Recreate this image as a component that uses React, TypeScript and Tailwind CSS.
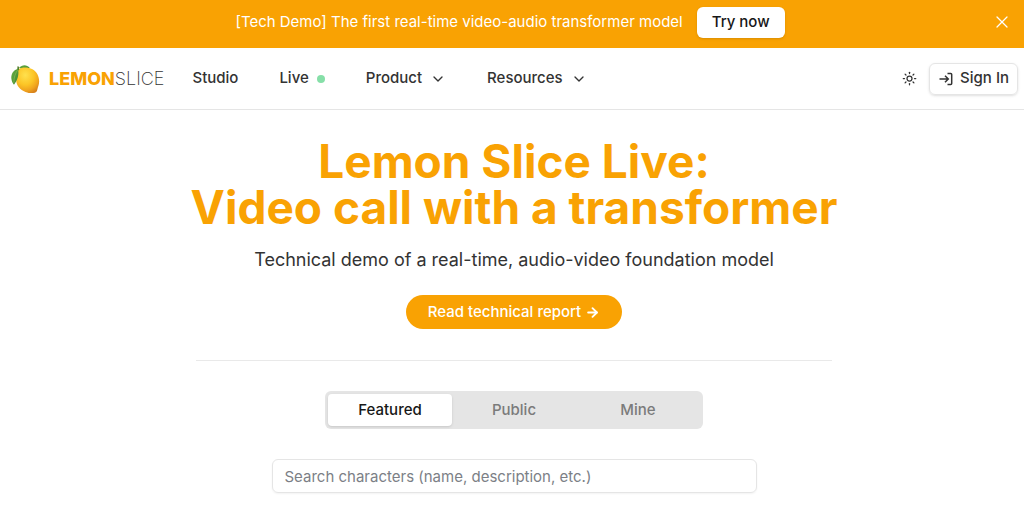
import { useState } from "react";
import { ArrowRight, ChevronDown, Sun, X } from "lucide-react";

const tabs = ["Featured", "Public", "Mine"];

function LemonLogo() {
  return (
    <svg viewBox="0 0 28 28" className="h-[30px] w-[30px]" aria-hidden="true">
      <defs>
        <radialGradient id="lemonSkin" cx="0.4" cy="0.3" r="0.75">
          <stop offset="0" stopColor="#ffe14e" />
          <stop offset="0.5" stopColor="#fcc526" />
          <stop offset="0.8" stopColor="#f0a31e" />
          <stop offset="1" stopColor="#d8831c" />
        </radialGradient>
        <linearGradient id="lemonLeaf" x1="0" y1="0" x2="1" y2="1">
          <stop offset="0" stopColor="#6cb043" />
          <stop offset="1" stopColor="#3a8530" />
        </linearGradient>
      </defs>
      <path d="M8.500 3.600C11 .6 15.500 0 18.500 3.700c-3.500 1.800-7 1.700-10-.1z" fill="url(#lemonLeaf)" />
      <path
        d="M8 4.800C11.500 2.600 17 2.800 21 5c4 2.300 6.200 6.500 6.200 11.300 0 3-1.200 4.900-1.600 7.200-.4 2.400-1.500 3.500-3.800 3.600-2.400.2-4.300.1-7.300-1C9.300 24.300 6 20.400 5.700 14.800c-.2-3.600.3-8 2.300-10z"
        fill="url(#lemonSkin)"
      />
      <path d="M7 2l1.400.5.2 2.800-2 1.800z" fill="#557e2a" />
      <path d="M7.400 4.500C3 5.700.3 10 1.500 15c.4 1.800 1 3 2.200 4.300C7 15.400 8.800 9.600 7.400 4.500z" fill="url(#lemonLeaf)" />
      <path d="M7.100 5.700C4.900 9 3.500 12.600 3.600 17.500" fill="none" stroke="#8fbe55" strokeWidth=".6" />
    </svg>
  );
}

function SignInIcon() {
  return (
    <svg
      viewBox="0 0 16 16"
      className="h-4 w-4"
      fill="none"
      stroke="currentColor"
      strokeWidth="1.5"
      aria-hidden="true"
    >
      <path d="M1.500 8h8.500M7 4.700L10.300 8 7 11.300M9.500 2.500h3.200c.6 0 1 .4 1 1v9c0 .6-.4 1-1 1H9.500" />
    </svg>
  );
}

export default function App() {
  const [activeTab, setActiveTab] = useState("Featured");
  const [search, setSearch] = useState("");
  const [showBanner, setShowBanner] = useState(true);

  return (
    <div className="min-h-screen bg-white font-['Inter',sans-serif] text-[#333]">
      {/* Announcement banner */}
      {showBanner && (
        <div className="flex h-12 items-center bg-[#f9a203] px-3 text-white">
          <div className="flex flex-1 items-center justify-center gap-3.5 pb-1 pl-4">
            <p className="text-[15px]">
              [Tech Demo] The first real-time video-audio transformer model
            </p>
            <button className="h-[31px] rounded-md bg-white px-[15px] text-[15px] font-medium text-[#171717] shadow-sm">
              Try now
            </button>
          </div>
          <button aria-label="Close banner" className="pb-1" onClick={() => setShowBanner(false)}>
            <X size={20} strokeWidth={1.5} />
          </button>
        </div>
      )}

      <header className="flex h-[62px] items-center justify-between border-b border-[#e5e5e5] pr-1.5 pl-2.5">
        <div className="flex items-center">
          <a href="#" className="flex items-center gap-[9px]">
            <LemonLogo />
            <span className="text-lg">
              <span className="font-extrabold text-[#f9a203]">LEMON</span>
              <span className="font-extralight">SLICE</span>
            </span>
          </a>
          <nav className="ml-7 flex items-center gap-[41px] text-[15px] font-medium">
            <a href="#studio">Studio</a>
            <a href="#live" className="flex items-center gap-2">
              Live
              <span className="h-2 w-2 rounded-full bg-[#86dfa8]" />
            </a>
            <button className="flex items-center gap-2">
              Product
              <ChevronDown size={16} />
            </button>
            <button className="flex items-center gap-2">
              Resources
              <ChevronDown size={16} />
            </button>
          </nav>
        </div>
        <div className="flex items-center gap-3">
          <button aria-label="Toggle theme">
            <Sun size={15} strokeWidth={2} />
          </button>
          <button className="flex h-8 items-center gap-1.5 rounded-md border border-[#e5e5e5] px-2 text-[15px] font-medium shadow-sm">
            <SignInIcon />
            Sign In
          </button>
        </div>
      </header>

      <main className="flex flex-col items-center pt-7 pr-4 pl-5">
        <h1 className="text-center text-[46px] leading-[46px] font-bold text-[#f9a203]">
          Lemon Slice Live:
          <br />
          Video call with a transformer
        </h1>
        <p className="mt-4 text-lg">
          Technical demo of a real-time, audio-video foundation model
        </p>
        <a
          href="#report"
          className="mt-[21px] flex h-[34px] items-center gap-1 rounded-full bg-[#f9a203] px-[22px] text-[15px] font-medium text-white"
        >
          Read technical report
          <ArrowRight size={15} strokeWidth={3} />
        </a>

        <hr className="mt-[31px] w-full max-w-[636px] border-[#e9e9e9]" />

        {/* Character filters */}
        <div
          role="tablist"
          className="mt-[30px] grid w-full max-w-[378px] grid-cols-3 rounded-md bg-[#e5e5e5] p-[3px]"
        >
          {tabs.map((tab) => (
            <button
              key={tab}
              role="tab"
              aria-selected={tab === activeTab}
              onClick={() => setActiveTab(tab)}
              className={`h-8 rounded text-[15px] font-medium ${
                tab === activeTab ? "bg-white text-[#171717] shadow-sm" : "text-[#7b7b7b]"
              }`}
            >
              {tab}
            </button>
          ))}
        </div>

        <input
          type="text"
          aria-label="Search characters"
          placeholder="Search characters (name, description, etc.)"
          value={search}
          onChange={(e) => setSearch(e.target.value)}
          className="mt-[30px] h-[34px] w-full max-w-[485px] rounded-md border border-[#e5e5e5] px-3 text-[15px] shadow-xs placeholder:text-[#7c7f86]"
        />
      </main>
    </div>
  );
}
